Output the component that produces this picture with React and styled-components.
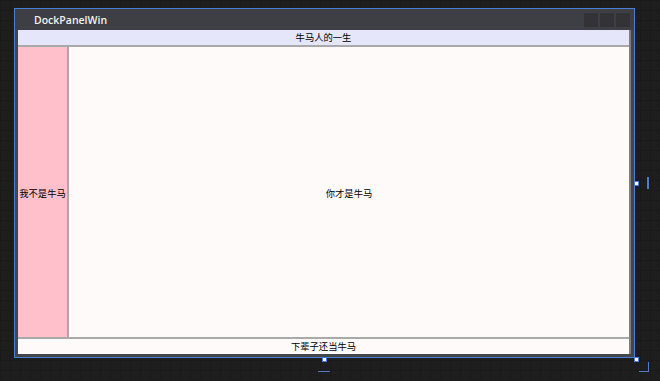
import React from "react";
import styled, { createGlobalStyle } from "styled-components";

const Global = createGlobalStyle`
  html, body { margin: 0; padding: 0; }
  body {
    width: 660px; height: 381px; overflow: hidden;
    background-color: #1e1e1e;
    background-image:
      linear-gradient(to right, #1a1a1a 1px, transparent 1px),
      linear-gradient(to bottom, #1a1a1a 1px, transparent 1px);
    background-size: 10px 10px;
    font-family: "Noto Sans CJK SC", "Noto Sans", sans-serif;
  }
`;

const Canvas = styled.div`
  position: relative;
  width: 660px;
  height: 381px;
  padding: 8px 0 0 14px;
  box-sizing: border-box;
`;

const Window = styled.div`
  width: 621px;
  height: 350px;
  box-sizing: border-box;
  border: 1px solid #4a7fd6;
  background: #45464b;
  display: flex;
  flex-direction: column;
`;

const TitleBar = styled.div`
  height: 21px;
  flex: none;
  background: #3e3f44;
  display: flex;
  align-items: center;
  padding: 0 4px 0 19px;
`;

const Title = styled.span`
  font-family: "Open Sans", "Liberation Sans", sans-serif;
  font-size: 10.5px;
  font-weight: 600;
  color: #f2f2f2;
  flex: 1;
  padding-top: 1px;
`;

const Buttons = styled.div`
  display: flex;
  gap: 2px;
  align-self: flex-start;
  margin-top: 4px;
`;

const WinButton = styled.div`
  width: 14px;
  height: 14px;
  background: #333337;
`;

const Body = styled.div`
  flex: 1;
  margin: 0 3px 3px 3px;
  display: flex;
  flex-direction: column;
  border-right: 2px solid #7d7d80;
`;

const Strip = styled.div`
  height: ${(p) => p.$h}px;
  flex: none;
  background: ${(p) => p.$bg};
  ${(p) => (p.$top ? "border-bottom: 2px solid #a9a9a9;" : "border-top: 2px solid #a9a9a9;")}
  display: flex;
  align-items: center;
  justify-content: center;
`;

const Middle = styled.div`
  flex: 1;
  display: flex;
  min-height: 0;
`;

const Side = styled.div`
  width: 49px;
  flex: none;
  background: #ffc0cb;
  border-right: 2px solid #a9a9a9;
  display: flex;
  align-items: center;
  justify-content: center;
  padding-top: 3px;
`;

const Fill = styled.div`
  flex: 1;
  background: #fffafa;
  display: flex;
  align-items: center;
  justify-content: center;
  padding-top: 3px;
`;

const Label = styled.span`
  font-family: "Noto Sans CJK SC", sans-serif;
  font-size: 9.3px;
  line-height: 1;
  color: #000;
  white-space: nowrap;
`;

const Handle = styled.div`
  position: absolute;
  left: ${(p) => p.$x}px;
  top: ${(p) => p.$y}px;
  width: 3px;
  height: 3px;
  background: #fff;
  border: 1px solid #4a7fd6;
`;

const Mark = styled.div`
  position: absolute;
  left: ${(p) => p.$x}px;
  top: ${(p) => p.$y}px;
  width: ${(p) => p.$w}px;
  height: ${(p) => p.$h}px;
  background: #4f7cc4;
`;

export default function App() {
  return (
    <>
      <Global />
      <Canvas>
        <Window>
          <TitleBar>
            <Title>DockPanelWin</Title>
            <Buttons>
              <WinButton />
              <WinButton />
              <WinButton />
            </Buttons>
          </TitleBar>
          <Body>
            <Strip $top $h={15} $bg="#e6e6fa">
              <Label>牛马人的一生</Label>
            </Strip>
            <Middle>
              <Side>
                <Label>我不是牛马</Label>
              </Side>
              <Fill>
                <Label>你才是牛马</Label>
              </Fill>
            </Middle>
            <Strip $h={15} $bg="#fffafa">
              <Label>下辈子还当牛马</Label>
            </Strip>
          </Body>
        </Window>
        <Handle $x={634} $y={181} />
        <Handle $x={322} $y={357} />
        <Handle $x={634} $y={357} />
        <Mark $x={647} $y={177} $w={2} $h={12} />
        <Mark $x={318} $y={371} $w={12} $h={1} />
        <Mark $x={648} $y={362} $w={1} $h={10} />
        <Mark $x={639} $y={371} $w={10} $h={1} />
      </Canvas>
    </>
  );
}
